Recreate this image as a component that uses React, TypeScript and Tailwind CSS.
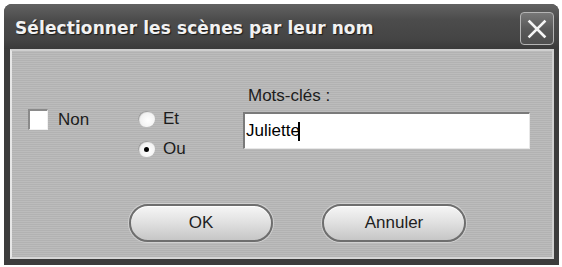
import React, { useState } from "react";

const sans = "font-['Liberation_Sans',Arial,sans-serif]";

const PillButton: React.FC<{ label: string }> = ({ label }) => (
  <button
    type="button"
    className={`h-[38px] w-[144px] rounded-full border-2 border-[#6e6e6e] bg-[linear-gradient(180deg,#f6f6f6_0%,#e2e2e2_45%,#c6c6c6_100%)] text-[17px] text-[#1e1e1e] shadow-[0_0_0_1px_#d0d0d0,inset_0_1px_0_#ffffff] ${sans}`}
  >
    {label}
  </button>
);

const App: React.FC = () => {
  const [exclude, setExclude] = useState(false);
  const [mode, setMode] = useState<"et" | "ou">("ou");
  const [keywords, setKeywords] = useState("Juliette");

  return (
    <div className="h-[267px] w-[562px] bg-white pl-[4px] pt-[4px]">
      <div className="flex h-[261px] w-[555px] flex-col rounded-t-[8px] bg-[#3c3c3c]">
        {/* title bar */}
        <div className="flex h-[45px] items-start justify-between rounded-t-[8px] bg-[linear-gradient(180deg,#626262_0%,#4c4c4c_35%,#444444_80%,#3a3a3a_100%)] pl-[11px] pr-[5px]">
          <h1 className="mt-[12px] font-['DejaVu_Sans',Verdana,sans-serif] text-[17px] font-bold tracking-[0.1px] text-[#f2f2f2] [text-shadow:1px_1px_1px_#1a1a1a]">
            Sélectionner les scènes par leur nom
          </h1>
          <button
            type="button"
            aria-label="Fermer"
            className="mt-[8px] flex h-[33px] w-[34px] items-center justify-center rounded-[4px] border border-[#b4b4b4] bg-[linear-gradient(180deg,#777777_0%,#5a5a5a_50%,#4e4e4e_100%)]"
          >
            <svg width="22" height="22" viewBox="0 0 22 22">
              <path d="M3.5 3.5 L18.5 18.5 M18.5 3.5 L3.5 18.5" stroke="#f4f4f4" strokeWidth="2.6" strokeLinecap="square" />
            </svg>
          </button>
        </div>

        {/* body */}
        <div className="mb-[6px] ml-[6px] mr-[5px] flex flex-1 flex-col border-b-2 border-l-2 border-r-2 border-t-2 border-b-[#d6d6d6] border-l-[#e6e6e6] border-r-[#d0d0d0] border-t-[#cfcfcf] bg-[repeating-linear-gradient(180deg,#bcbcbc_0px,#bcbcbc_1px,#b2b2b2_1px,#b2b2b2_2px)]">
          <div className={`mt-[34px] flex pl-[16px] text-[17px] text-[#1c1c1c] ${sans}`}>
            {/* exclude */}
            <label className="mt-[24px] flex h-[21px] w-[110px] cursor-pointer items-center" onClick={() => setExclude(!exclude)}>
              <span className="flex h-[21px] w-[20px] items-center justify-center border-l-2 border-t-2 border-b border-r border-l-[#8a8a8a] border-t-[#8a8a8a] border-b-[#f0f0f0] border-r-[#f0f0f0] bg-white text-[14px] leading-none">
                {exclude ? "✓" : ""}
              </span>
              <span className="ml-[10px]">Non</span>
            </label>

            {/* and / or */}
            <div className="mt-[26px] flex w-[105px] flex-col gap-[14px]">
              {(["et", "ou"] as const).map((m) => (
                <label key={m} className="flex h-[16px] cursor-pointer items-center" onClick={() => setMode(m)}>
                  <span className="flex h-[16px] w-[17px] items-center justify-center rounded-full bg-[radial-gradient(circle_at_60%_60%,#ffffff_0%,#f2f2f2_55%,#c8c8c8_100%)] shadow-[inset_1px_1px_1px_#9a9a9a]">
                    {mode === m && <span className="h-[5px] w-[5px] rounded-full bg-black" />}
                  </span>
                  <span className="ml-[8px]">{m === "et" ? "Et" : "Ou"}</span>
                </label>
              ))}
            </div>

            {/* keywords */}
            <div className="flex flex-col">
              <span className="ml-[5px] mt-[1px] leading-[20px]">Mots-clés :</span>
              <div className="mt-[6px] flex h-[37px] w-[287px] items-center border-l-2 border-t-2 border-b border-r border-l-[#7a7a7a] border-t-[#7a7a7a] border-b-[#e8e8e8] border-r-[#e8e8e8] bg-white pl-[1px]">
                <input
                  value={keywords}
                  onChange={(e) => setKeywords(e.target.value)}
                  size={keywords.length}
                  className="w-[52px] bg-transparent text-[17px] text-black outline-none"
                />
                <span className="h-[19px] w-[2px] bg-black" />
              </div>
            </div>
          </div>

          {/* actions */}
          <div className="mt-[47px] flex gap-[49px] pl-[117px]">
            <PillButton label="OK" />
            <PillButton label="Annuler" />
          </div>
        </div>
      </div>
    </div>
  );
};

export default App;
